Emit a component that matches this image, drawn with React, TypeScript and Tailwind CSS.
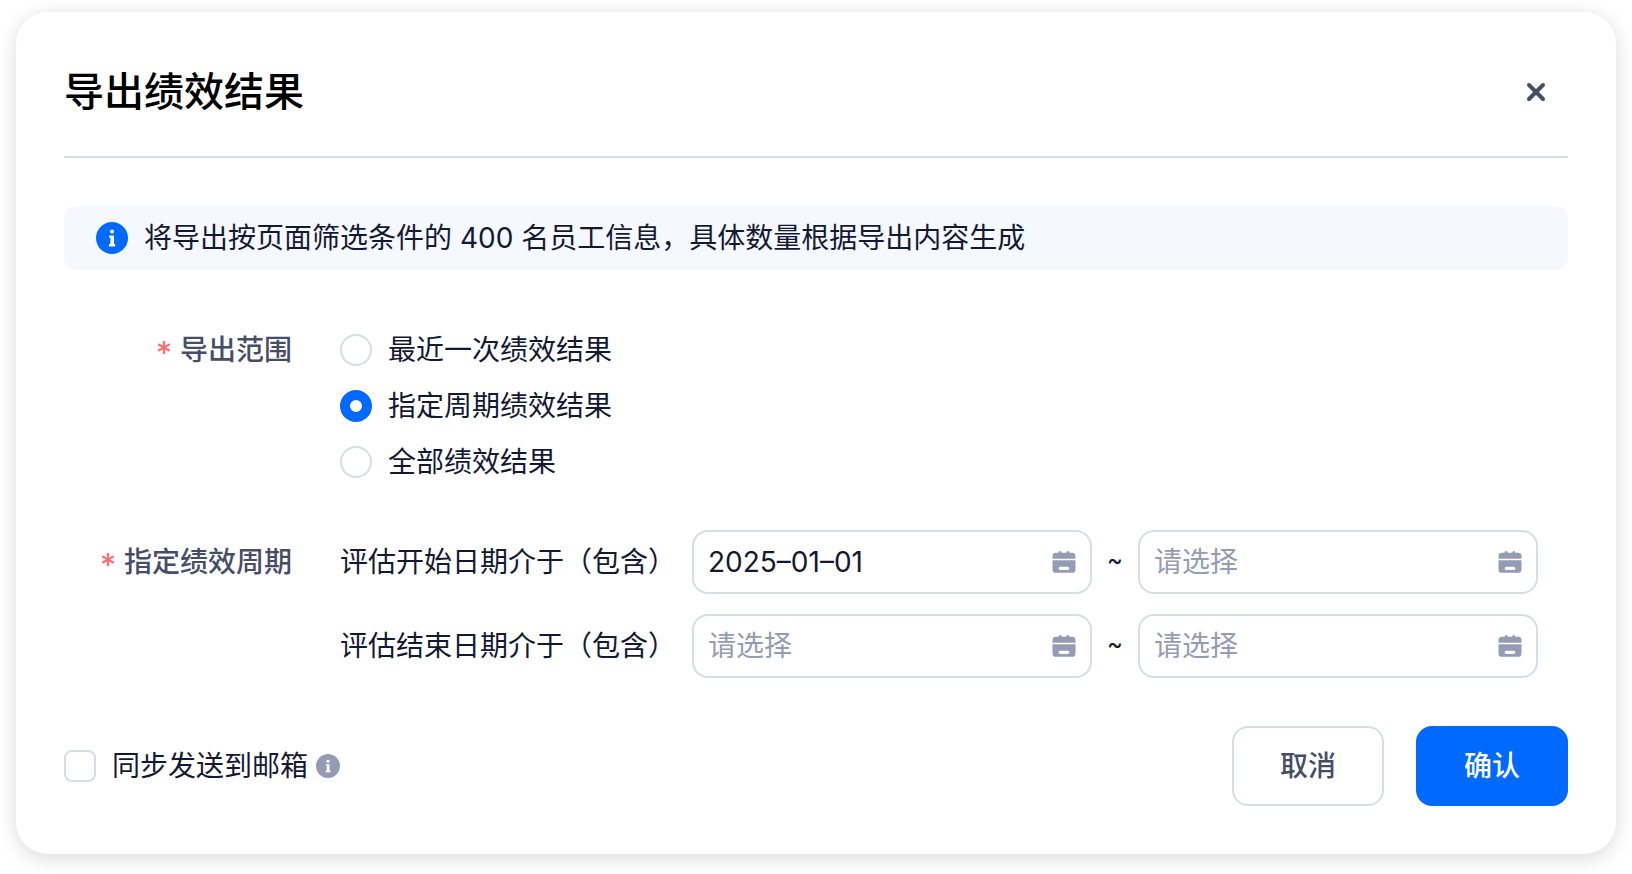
import { useState } from 'react';
import type { ReactNode } from 'react';

type Scope = 'latest' | 'period' | 'all';

const SCOPES: Array<{ value: Scope; label: string }> = [
  { value: 'latest', label: '最近一次绩效结果' },
  { value: 'period', label: '指定周期绩效结果' },
  { value: 'all', label: '全部绩效结果' },
];

const PERIODS = [
  { label: '评估开始日期介于（包含）', from: '2025–01–01', to: '' },
  { label: '评估结束日期介于（包含）', from: '', to: '' },
];

export default function App() {
  const [scope, setScope] = useState<Scope>('period');

  return (
    <div className="bg-white px-4 pt-3 pb-5 font-['Inter','Noto_Sans_CJK_SC',sans-serif] text-[28px] leading-10 text-[#141933]">
      <section
        role="dialog"
        aria-labelledby="export-title"
        className="rounded-[32px] bg-white px-12 pb-12 shadow-[0_4px_20px_rgba(0,0,0,0.15)]"
      >
        <header className="flex h-[146px] items-center justify-between border-b-2 border-[#d8dce6] pt-4">
          <h1 id="export-title" className="text-[40px] leading-[56px] font-medium text-black">
            导出绩效结果
          </h1>
          <button type="button" aria-label="关闭" className="p-4">
            <CloseIcon />
          </button>
        </header>

        <p className="mt-12 flex h-16 items-center gap-4 rounded-xl bg-[#f5f8ff] px-8">
          <InfoIcon className="size-8 shrink-0 text-[#0069ff]" />
          <span>将导出按页面筛选条件的 400 名员工信息，具体数量根据导出内容生成</span>
        </p>

        <form>
          <FormRow label="导出范围" className="mt-15">
            <div className="flex flex-col gap-4">
              {SCOPES.map((s) => (
                <label key={s.value} className="flex items-center gap-4">
                  <input
                    type="radio"
                    name="scope"
                    value={s.value}
                    checked={scope === s.value}
                    onChange={() => setScope(s.value)}
                    className="size-8 shrink-0 appearance-none rounded-full border-2 border-[#d8dce6] bg-white checked:border-[10px] checked:border-[#0069ff]"
                  />
                  <span>{s.label}</span>
                </label>
              ))}
            </div>
          </FormRow>

          <FormRow label="指定绩效周期" className="mt-12" labelClassName="pt-3">
            <div className="flex flex-col gap-5">
              {PERIODS.map((p) => (
                <div key={p.label} className="flex items-center gap-4">
                  <span className="shrink-0">{p.label}</span>
                  <DateField name={`${p.label}起`} value={p.from} />
                  <span className="flex w-[14px] shrink-0 justify-center pb-1 text-2xl">~</span>
                  <DateField name={`${p.label}止`} value={p.to} />
                </div>
              ))}
            </div>
          </FormRow>

          <footer className="mt-12 flex items-center justify-between">
            <div className="flex items-center gap-2">
              <label className="flex items-center gap-4">
                <input
                  type="checkbox"
                  className="size-8 shrink-0 appearance-none rounded-lg border-2 border-[#d8dce6] checked:border-[#0069ff] checked:bg-[#0069ff]"
                />
                <span>同步发送到邮箱</span>
              </label>
              <InfoIcon className="size-6 text-[#969bb4]" />
            </div>
            <div className="flex gap-8 font-medium">
              <button
                type="button"
                className="h-20 w-[152px] rounded-2xl border-2 border-[#d8dce6] text-[#474d69]"
              >
                取消
              </button>
              <button type="button" className="h-20 w-[152px] rounded-2xl bg-[#0069ff] text-white">
                确认
              </button>
            </div>
          </footer>
        </form>
      </section>
    </div>
  );
}

function FormRow({
  label,
  className,
  labelClassName = '',
  children,
}: {
  label: string;
  className: string;
  labelClassName?: string;
  children: ReactNode;
}) {
  return (
    <fieldset aria-label={label} className={`flex gap-12 ${className}`}>
      <div className={`flex w-[228px] shrink-0 justify-end gap-2 ${labelClassName}`}>
        <span className="pt-1 text-[32px] text-[#ff6b6b]">*</span>
        <span className="font-medium text-[#474d69]">{label}</span>
      </div>
      <div className="min-w-0 flex-1">{children}</div>
    </fieldset>
  );
}

function DateField({ name, value }: { name: string; value: string }) {
  return (
    <div className="flex h-16 max-w-[400px] min-w-0 flex-1 items-center rounded-2xl border-2 border-[#d8dce6] px-[14px]">
      <input
        type="text"
        aria-label={name}
        defaultValue={value}
        placeholder="请选择"
        className="h-10 min-w-0 flex-1 outline-none placeholder:text-[#969bb4]"
      />
      <CalendarIcon />
    </div>
  );
}

function InfoIcon({ className }: { className: string }) {
  return (
    <svg viewBox="0 0 32 32" aria-hidden="true" className={className}>
      <circle cx="16" cy="16" r="16" fill="currentColor" />
      <circle cx="16" cy="9.6" r="2.1" fill="#fff" />
      <path d="M13.2 13.5h4.8v8.5h1.2v2.4h-6.2v-2.4h1.4v-6.2h-1.2z" fill="#fff" />
    </svg>
  );
}

function CloseIcon() {
  return (
    <svg
      viewBox="0 0 32 32"
      aria-hidden="true"
      className="size-8"
      fill="none"
      stroke="#474d69"
      strokeWidth="4"
      strokeLinecap="round"
    >
      <path d="M9 9l14 14M23 9L9 23" />
    </svg>
  );
}

function CalendarIcon() {
  return (
    <svg viewBox="0 0 24 24" aria-hidden="true" className="size-6 shrink-0 text-[#969bb4]" fill="currentColor">
      <path d="M.5 8.7V6a3.4 3.4 0 0 1 3.4-3.3h2.7a1.6 1.6 0 0 1 3.2 0h4.4a1.6 1.6 0 0 1 3.2 0h2.7A3.4 3.4 0 0 1 23.500 6v2.700z" />
      <path
        fillRule="evenodd"
        d="M.5 10.300h23V19.400a3.400 3.400 0 0 1-3.400 3.400H3.900a3.400 3.400 0 0 1-3.400-3.400zM8.200 16.700a1.600 1.600 0 0 0 0 3.200h7.600a1.600 1.600 0 0 0 0-3.200z"
      />
    </svg>
  );
}
